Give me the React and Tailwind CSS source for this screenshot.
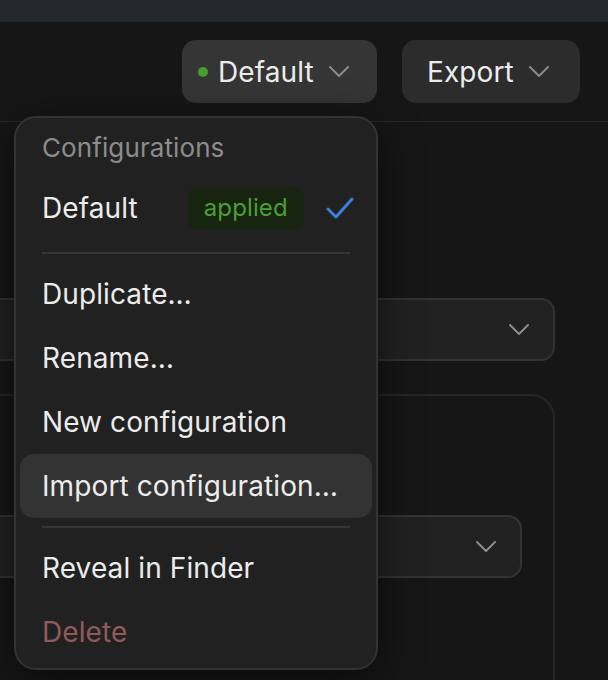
import React from "react";

function Chevron({ className = "" }) {
  return (
    <svg viewBox="0 0 20 11" className={className} fill="none" stroke="currentColor" strokeWidth="2" strokeLinecap="round" strokeLinejoin="round">
      <path d="M1 1 L10 10 L19 1" />
    </svg>
  );
}

function Check() {
  return (
    <svg viewBox="0 0 28 22" className="w-[28px] h-[22px] text-[#3d7fdc]" fill="none" stroke="currentColor" strokeWidth="3" strokeLinecap="round" strokeLinejoin="round">
      <path d="M2 12 L10 20 L26 2" />
    </svg>
  );
}

function Item({ children, active = false, danger = false }) {
  return (
    <div
      className={
        "h-[64px] flex items-center px-[22px] rounded-[14px] " +
        (active ? "bg-[#333333] " : "") +
        (danger ? "text-[#8f5a5a]" : "text-[#ececec]")
      }
    >
      {children}
    </div>
  );
}

function Divider() {
  return <div className="mx-[22px] my-[8px] h-[2px] bg-[#353535]" />;
}

export default function App() {
  return (
    <div
      className="relative w-[608px] h-[680px] overflow-hidden bg-[#161616] text-[28px] tracking-[0.1px]"
      style={{ fontFamily: "Inter, 'Noto Sans', sans-serif" }}
    >
      <div className="h-[22px] bg-[#24282c]" />
      <div className="h-[100px] border-b border-[#2a2a2a] flex items-center justify-end gap-[25px] pr-[28px]">
        <button className="h-[63px] w-[195px] rounded-[14px] bg-[#353535] flex items-center pl-[16px] text-[#ececec]">
          <span className="w-[10px] h-[10px] rounded-full bg-[#44a02e] mr-[10px]" />
          <span>Default</span>
          <Chevron className="w-[20px] h-[11px] ml-[15px] text-[#8a8a8a]" />
        </button>
        <button className="h-[63px] w-[178px] rounded-[14px] bg-[#2c2c2c] flex items-center pl-[25px] text-[#ececec]">
          <span>Export</span>
          <Chevron className="w-[20px] h-[11px] ml-[15px] text-[#8a8a8a]" />
        </button>
      </div>

      <div className="ml-[-30px] mr-[53px] pt-[176px]">
        <div className="h-[63px] rounded-[14px] border-2 border-[#333333] bg-[#212121] flex items-center justify-end pr-[24px]">
          <Chevron className="w-[20px] h-[11px] text-[#8c8c8c]" />
        </div>
        <div className="mt-[33px] h-[320px] rounded-[24px] border-2 border-[#262626] bg-[#161616] pt-[119px] pr-[31px]">
          <div className="h-[63px] rounded-[14px] border-2 border-[#333333] bg-[#212121] flex items-center justify-end pr-[24px]">
            <Chevron className="w-[20px] h-[11px] text-[#8c8c8c]" />
          </div>
        </div>
      </div>

      <div className="absolute left-[14px] top-[116px] w-[364px] h-[554px] rounded-[22px] border-2 border-[#333333] bg-[#212121] p-[4px] shadow-[0_10px_40px_rgba(0,0,0,0.55)]">
        <div className="h-[50px] flex items-center px-[22px] text-[26px] text-[#8c8c8c]">Configurations</div>
        <div className="h-[72px] flex items-center px-[22px] text-[#ececec]">
          <span>Default</span>
          <span className="ml-[50px] h-[43px] px-[16px] rounded-[10px] bg-[#17240f] text-[24px] text-[#4a9f35] flex items-center">applied</span>
          <span className="ml-[22px]"><Check /></span>
        </div>
        <Divider />
        <Item>Duplicate…</Item>
        <Item>Rename…</Item>
        <Item>New configuration</Item>
        <Item active>Import configuration…</Item>
        <Divider />
        <Item>Reveal in Finder</Item>
        <Item danger>Delete</Item>
      </div>
    </div>
  );
}
